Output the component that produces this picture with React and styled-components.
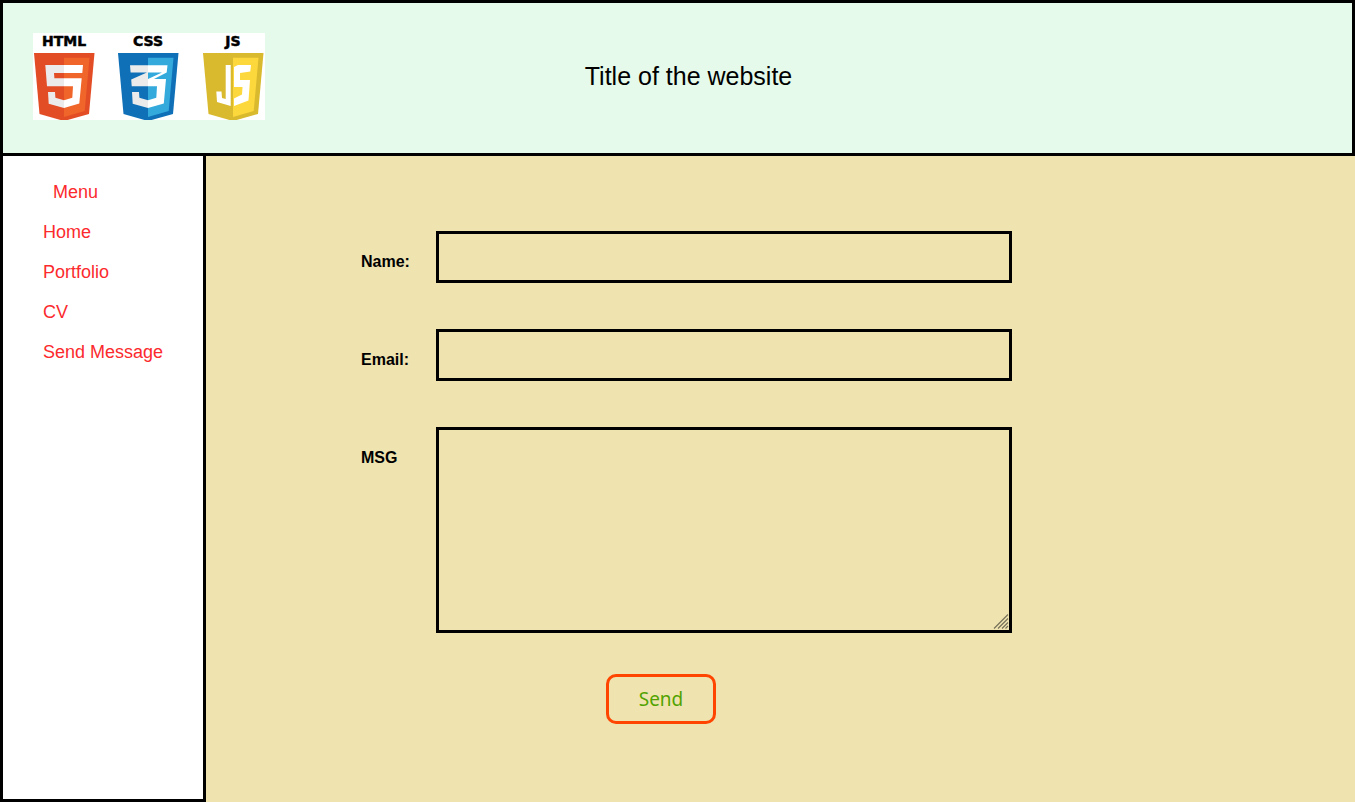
import React from 'react';
import styled, { createGlobalStyle } from 'styled-components';

const GlobalStyle = createGlobalStyle`
  * { box-sizing: border-box; }
  body {
    margin: 0;
    font-family: "Liberation Sans", Arial, sans-serif;
    color: #000;
  }
`;

const Page = styled.div`
  display: flex;
  flex-direction: column;
  min-height: 100vh;
  background: #efe3af;
`;

const Header = styled.header`
  display: flex;
  align-items: center;
  padding: 30px 30px 33px;
  border: 3px solid #000;
  background: #e5faea;
`;

const Title = styled.h1`
  flex: 1;
  margin: 0;
  padding-right: 210px;
  font-size: 25px;
  line-height: 31px;
  font-weight: 400;
  text-align: center;
`;

const Body = styled.div`
  display: flex;
  flex: 1;
`;

const Sidebar = styled.nav`
  width: 206px;
  padding: 26px 0 26px 40px;
  border: 3px solid #000;
  border-top: 0;
  background: #fff;
  color: #fb2a2d;
  font-size: 18px;
  line-height: 20px;
`;

const MenuTitle = styled.h2`
  margin: 0 0 20px 10px;
  font: inherit;
`;

const MenuList = styled.ul`
  display: flex;
  flex-direction: column;
  gap: 20px;
  margin: 0;
  padding: 0;
  list-style: none;
`;

const MenuLink = styled.a`
  color: inherit;
  text-decoration: none;
`;

const Main = styled.main`
  flex: 1;
  padding: 75px 343px 75px 155px;
`;

const Form = styled.form`
  display: flex;
  flex-direction: column;
  gap: 46px;
`;

const Row = styled.div`
  display: flex;
  align-items: flex-start;
`;

const Label = styled.label`
  flex: 0 0 75px;
  padding-top: 21px;
  font-size: 16px;
  line-height: 20px;
  font-weight: 700;
`;

const Field = styled.input`
  flex: 1;
  min-width: 0;
  height: 52px;
  padding: 0 10px;
  border: 3px solid #000;
  border-radius: 0;
  background: transparent;
  font: inherit;
  outline: none;
`;

const AreaWrap = styled.div`
  position: relative;
  display: flex;
  flex: 1;
`;

const Area = styled.textarea`
  flex: 1;
  min-width: 0;
  height: 206px;
  padding: 10px;
  border: 3px solid #000;
  border-radius: 0;
  background: transparent;
  font: inherit;
  resize: none;
  outline: none;
`;

const Grip = styled.svg`
  position: absolute;
  right: 3px;
  bottom: 3px;
  pointer-events: none;
`;

const SendButton = styled.button`
  align-self: flex-start;
  height: 50px;
  min-width: 110px;
  margin: -5px 0 0 245px;
  padding: 0 20px;
  border: 3px solid #ff4500;
  border-radius: 10px;
  background: transparent;
  color: #52a300;
  font-family: "Noto Sans", "Open Sans", sans-serif;
  font-size: 19px;
  line-height: 24px;
`;

const LogoSvg = styled.svg`
  display: block;
  flex: none;
  background: #fff;

  text {
    font-family: "DejaVu Sans", sans-serif;
    font-weight: 700;
    font-size: 14px;
    text-anchor: middle;
    stroke: #000;
    stroke-width: 0.5px;
  }
`;

function Shield({ dark, light }) {
  return (
    <>
      <path fill={dark} d="M1 20H61.5L56 81L31 88L6.5 81Z" />
      <path fill={light} d="M31 24.7H56.5L51.7 78L31 84Z" />
    </>
  );
}

function Logo() {
  return (
    <LogoSvg width="232" height="87" viewBox="0 0 232 87" role="img" aria-label="HTML, CSS and JS">
      <text x="31" y="13">HTML</text>
      <text x="115" y="13">CSS</text>
      <text x="200" y="13">JS</text>
      <g>
        <Shield dark="#e34d26" light="#f06529" />
        <path fill="#ebebeb" d="M12.3 32H31V40H21L21.4 45.3H31V53.3H14ZM15 59H22L22.4 64.7L31 67.3V75L15.7 70.7Z" />
        <path fill="#fff" d="M31 32H50L49.3 40H31ZM31 45.3H48.7L46.3 70.5L31 75V67.3L39.3 64.7L40 53.3H31Z" />
      </g>
      <g transform="translate(84 0)">
        <Shield dark="#0f70b8" light="#33a9dc" />
        <path fill="#ebebeb" d="M13 32.3H31V39.6H13.6ZM31 39V53.3H14.7L14.2 46.5ZM15 59H22L22.4 64.7L31 67.3V75L15.7 70.7Z" />
        <path fill="#fff" d="M31 32.3H50.5L49.7 39.5L37 46H49L46.8 70.5L31 75V67.3L39.3 64.7L40 53.3H31V46L45 39.6H31Z" />
      </g>
      <g transform="translate(169 0)">
        <Shield dark="#d9b92e" light="#fdd83c" />
        <path fill="#fff" d="M23.7 32H28.7V73L15 69L14.3 58.5H19.5L20 65L23.7 66Z" />
        <path fill="#fff" d="M32 34L36 32H49L48.3 38.6L38 40V47H48L46.5 67.5L32 73V65.5L40 61.5L40.5 54H32Z" />
      </g>
    </LogoSvg>
  );
}

const links = ['Home', 'Portfolio', 'CV', 'Send Message'];

export default function App() {
  return (
    <Page>
      <GlobalStyle />
      <Header>
        <Logo />
        <Title>Title of the website</Title>
      </Header>
      <Body>
        <Sidebar>
          <MenuTitle>Menu</MenuTitle>
          <MenuList>
            {links.map((name) => (
              <li key={name}><MenuLink href="#">{name}</MenuLink></li>
            ))}
          </MenuList>
        </Sidebar>
        <Main>
          <Form>
            <Row>
              <Label htmlFor="name">Name:</Label>
              <Field id="name" type="text" />
            </Row>
            <Row>
              <Label htmlFor="email">Email:</Label>
              <Field id="email" type="email" />
            </Row>
            <Row>
              <Label htmlFor="msg">MSG</Label>
              <AreaWrap>
                <Area id="msg" />
                <Grip width="16" height="16" viewBox="0 0 16 16" fill="none" stroke="#77725a" strokeWidth="1.2" aria-hidden="true">
                  <path d="M1 14.5L15 0.5M5 14.5L15 4.5M9 14.5L15 8.5M12.5 14.5L15 12" />
                </Grip>
              </AreaWrap>
            </Row>
            <SendButton type="button">Send</SendButton>
          </Form>
        </Main>
      </Body>
    </Page>
  );
}
